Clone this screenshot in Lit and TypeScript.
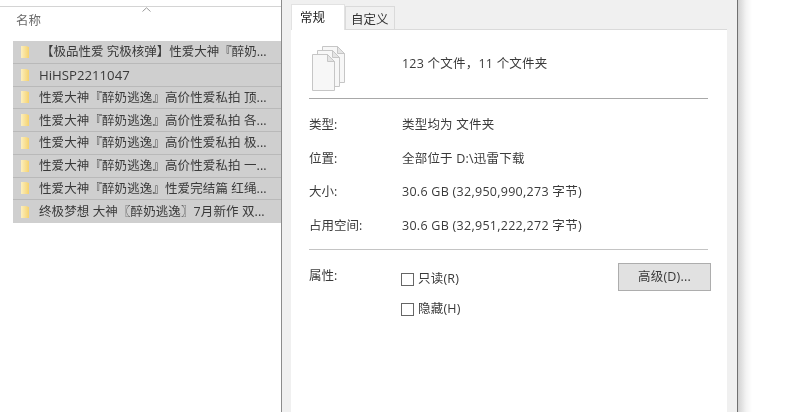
import { LitElement, html, css, svg } from "lit";
import { customElement } from "lit/decorators.js";

const names = [
  "【极品性爱 究极核弹】性爱大神『醉奶...",
  "HiHSP2211047",
  "性爱大神『醉奶逃逸』高价性爱私拍 顶...",
  "性爱大神『醉奶逃逸』高价性爱私拍 各...",
  "性爱大神『醉奶逃逸』高价性爱私拍 极...",
  "性爱大神『醉奶逃逸』高价性爱私拍 一...",
  "性爱大神『醉奶逃逸』性爱完结篇 红绳...",
  "终极梦想 大神〖醉奶逃逸〗7月新作 双...",
];

const sheet = (x: number, y: number) => svg`
  <path d="M${x + 0.5} ${y + 0.5}H${x + 15.5}L${x + 22.5} ${y + 7.5}V${y + 36.5}H${x + 0.5}Z" fill="#f7f7f7" stroke="#c6c6c6"/>
  <path d="M${x + 15.5} ${y + 0.5}V${y + 7.5}H${x + 22.5}Z" fill="#e4e4e4" stroke="#c6c6c6"/>`;

@customElement("app-root")
export class AppRoot extends LitElement {
  static styles = css`
    :host {
      display: flex;
      width: 800px;
      height: 412px;
      overflow: hidden;
      background: #fff;
      color: #3a3a3a;
      font: 12.5px/18px "Open Sans", "Noto Sans CJK SC", sans-serif;
      filter: blur(0.35px);
    }
    .pane {
      width: 281px;
      flex: none;
      display: flex;
      flex-direction: column;
      border-right: 1px solid #8c8c8c;
    }
    .topline {
      height: 6px;
      border-bottom: 1px solid #d4d4d4;
    }
    .head {
      height: 34px;
      padding-left: 16px;
      display: flex;
      align-items: flex-start;
      color: #6b6b6b;
      position: relative;
    }
    .head span {
      margin-top: 5px;
    }
    .sort {
      position: absolute;
      left: 142px;
      top: 0;
    }
    .list {
      margin-left: 13px;
      display: flex;
      flex-direction: column;
      background: #cfcfcf;
    }
    .row {
      height: 21.75px;
      border-bottom: 1px solid #b9b9b9;
      display: flex;
      align-items: center;
      white-space: nowrap;
      overflow: hidden;
      letter-spacing: 0.1px;
    }
    .row > span {
      padding-top: 1px;
    }
    .row .latin {
      font-size: 13.2px;
      letter-spacing: 0;
    }
    .row .lead {
      margin-left: 2px;
      letter-spacing: 0;
    }
    .row:last-child {
      border-bottom: 0;
      height: 22.75px;
    }
    .row svg {
      margin-left: 7px;
      margin-right: 9px;
      flex: none;
    }
    .dialog {
      width: 456px;
      flex: none;
      background: #f0f0f0;
      border-right: 1px solid #707070;
      padding: 0 10px 0 9px;
      box-sizing: border-box;
      display: flex;
      flex-direction: column;
    }
    .tabs {
      height: 29px;
      flex: none;
      display: flex;
      align-items: flex-end;
    }
    .tab {
      box-sizing: border-box;
    }
    .tab.on {
      width: 54px;
      height: 26px;
      margin-bottom: -1px;
      background: #fff;
      padding: 4px 0 0 8px;
      position: relative;
      color: #222;
      border: 1px solid #e2e2e2;
      border-bottom: 0;
    }
    .tab.off {
      width: 50px;
      height: 23px;
      background: #f0f0f0;
      border: 1px solid #dadada;
      border-bottom: 0;
      padding: 4px 0 0 5px;
      color: #333;
    }
    .panel {
      flex: 1;
      background: #fff;
      padding: 0 19px 0 18px;
      border-top: 1px solid #dadada;
    }
    .summary {
      height: 69px;
      display: flex;
      align-items: center;
      border-bottom: 1px solid #a8a8a8;
      box-sizing: border-box;
    }
    .summary svg {
      margin-left: 3px;
      margin-right: 57px;
      margin-top: 9px;
      flex: none;
    }
    .summary span {
      letter-spacing: 0.22px;
      margin-top: -1px;
    }
    .info {
      height: 151px;
      box-sizing: border-box;
      border-bottom: 1px solid #c4c4c4;
      padding-top: 17px;
      display: grid;
      grid-template-columns: 93px 1fr;
      grid-auto-rows: 33.7px;
    }
    .value {
      letter-spacing: 0.2px;
    }
    .value.num {
      letter-spacing: 0.28px;
    }
    .attrs {
      display: grid;
      grid-template-columns: 92px 217px 93px;
      padding-top: 17px;
    }
    .checks {
      display: flex;
      flex-direction: column;
      gap: 12px;
      padding-top: 3px;
    }
    .check {
      display: flex;
      align-items: center;
      gap: 4px;
      height: 18px;
      letter-spacing: 0.2px;
    }
    .box {
      box-sizing: border-box;
      width: 13px;
      height: 13px;
      border: 1px solid #666;
      background: #fff;
      flex: none;
    }
    .btn {
      box-sizing: border-box;
      width: 93px;
      height: 28px;
      margin-top: -4px;
      border: 1px solid #adadad;
      background: #e1e1e1;
      display: flex;
      align-items: center;
      justify-content: center;
      letter-spacing: 0.2px;
    }
    .shadow {
      flex: 1;
      background: linear-gradient(90deg, #d2d2d2, #f3f3f3 8px, #fff 14px);
    }
  `;

  render() {
    return html`
      <div class="pane">
        <div class="topline"></div>
        <div class="head">
          <span>名称</span>
          <svg class="sort" width="9" height="6" viewBox="0 0 9 6"><path d="M.5 4.5 4.5.8l4 3.7" fill="none" stroke="#9a9a9a"/></svg>
        </div>
        <div class="list">
          ${names.map(
            (n, i) => html`<div class="row">
              <svg width="10" height="14" viewBox="0 0 10 14">
                <defs><linearGradient id="f${i}"><stop offset="0" stop-color="#fcefbe"/><stop offset="1" stop-color="#f5d26f"/></linearGradient></defs>
                <path d="M1 1h5l3 1v11H1z" fill="url(#f${i})"/>
              </svg>
              <span class="${i === 0 ? "lead" : i === 1 ? "latin" : ""}">${n}</span>
            </div>`
          )}
        </div>
      </div>
      <div class="dialog">
        <div class="tabs">
          <div class="tab on">常规</div>
          <div class="tab off">自定义</div>
        </div>
        <div class="panel">
          <div class="summary">
            <svg width="33" height="46" viewBox="0 0 33 46">
              ${sheet(10, 0)}${sheet(5, 4)}${sheet(0, 8)}
            </svg>
            <span>123 个文件，11 个文件夹</span>
          </div>
          <div class="info">
            <span>类型:</span><span class="value">类型均为 文件夹</span>
            <span>位置:</span><span class="value">全部位于 D:\\迅雷下载</span>
            <span>大小:</span><span class="value num">30.6 GB (32,950,990,273 字节)</span>
            <span>占用空间:</span><span class="value num">30.6 GB (32,951,222,272 字节)</span>
          </div>
          <div class="attrs">
            <span>属性:</span>
            <div class="checks">
              <div class="check"><span class="box"></span>只读(R)</div>
              <div class="check"><span class="box"></span>隐藏(H)</div>
            </div>
            <div class="btn">高级(D)...</div>
          </div>
        </div>
      </div>
      <div class="shadow"></div>
    `;
  }
}
